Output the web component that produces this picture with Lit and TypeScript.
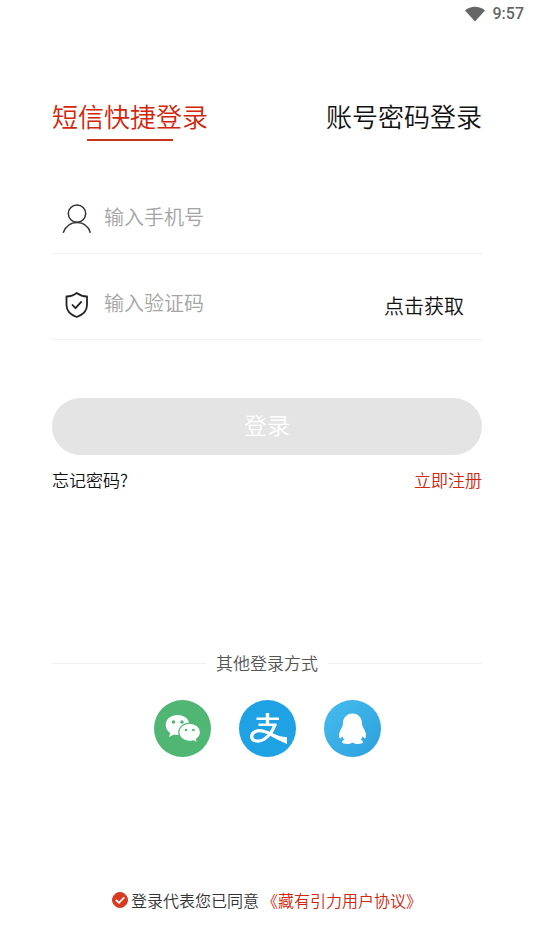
import { LitElement, html, css } from "lit";
import { customElement, state } from "lit/decorators.js";

@customElement("app-root")
export class AppRoot extends LitElement {
  @state() private tab: "sms" | "password" = "sms";

  static styles = css`
    :host {
      display: block;
      background: #fff;
      color: #111;
      font-family: "Noto Sans CJK SC", "Noto Sans", sans-serif;
      font-weight: 350;
    }
    * {
      box-sizing: border-box;
    }
    button,
    input {
      font: inherit;
      color: inherit;
      border: 0;
      margin: 0;
      padding: 0;
      background: none;
    }
    button {
      cursor: pointer;
    }
    svg {
      display: block;
      flex: none;
    }
    .page {
      display: flex;
      flex-direction: column;
      min-height: 100vh;
    }
    .status {
      display: flex;
      align-items: center;
      justify-content: flex-end;
      gap: 8px;
      height: 28px;
      padding-right: 10px;
      color: #666;
      font: 500 16px/28px Roboto, sans-serif;
    }
    main {
      display: flex;
      flex-direction: column;
      padding: 68px 52px 0;
    }
    .tabs {
      display: flex;
      justify-content: space-between;
      height: 72px;
    }
    .tab {
      display: flex;
      flex-direction: column;
      align-items: center;
      gap: 3px;
      font-size: 26px;
      line-height: 40px;
      color: #111;
    }
    .tab.active {
      color: #d2260c;
    }
    .tab.active::after {
      content: "";
      width: 86px;
      height: 2px;
      background: #c8341c;
    }
    .field {
      display: flex;
      align-items: center;
      height: 86px;
      padding: 12px 18px 0 10px;
      border-bottom: 1px solid #f0f0f0;
      font-size: 20px;
      line-height: 30px;
    }
    .field svg {
      margin-top: 4px;
    }
    .field input {
      flex: 1;
      min-width: 0;
      height: 30px;
      margin-left: 12px;
      outline: 0;
    }
    .field input::placeholder {
      color: #a4a4a4;
      opacity: 1;
    }
    .code {
      padding-top: 6px;
    }
    .submit {
      height: 57px;
      margin-top: 58px;
      padding-bottom: 6px;
      border-radius: 29px;
      background: #e4e4e4;
      color: #fff;
      font-size: 23px;
      line-height: 34px;
    }
    .links {
      display: flex;
      justify-content: space-between;
      margin-top: 12px;
      font-size: 17px;
      line-height: 26px;
    }
    a {
      color: inherit;
      text-decoration: none;
    }
    a.red {
      color: #d2260c;
    }
    .divider {
      display: flex;
      align-items: center;
      gap: 10px;
      margin-top: 157px;
      color: #555;
      font-size: 17px;
      line-height: 26px;
    }
    .divider::before,
    .divider::after {
      content: "";
      flex: 1;
      height: 1px;
      background: #efefef;
    }
    .socials {
      display: flex;
      justify-content: center;
      gap: 28px;
      margin-top: 24px;
    }
    footer {
      display: flex;
      align-items: center;
      justify-content: center;
      gap: 3px;
      margin-top: auto;
      padding: 40px 0 36px;
      color: #333;
      font-size: 16px;
      line-height: 26px;
    }
    .agree {
      display: flex;
      align-items: center;
      gap: 3px;
    }
    .box {
      display: grid;
      place-items: center;
    }
    .box > * {
      grid-area: 1 / 1;
    }
    .box input {
      appearance: none;
      width: 16px;
      height: 16px;
      border-radius: 8px;
      border: 1px solid #d63a20;
    }
    .box input:checked {
      background: #d63a20;
    }
    .box svg {
      pointer-events: none;
    }
  `;

  render() {
    return html`
      <div class="page">
        <div class="status">
          <svg width="20" height="16" viewBox="0 0 20 16">
            <path d="M0 4.4C5.6-.6 14.4-.6 20 4.4L10 15.6Z" fill="#666" />
          </svg>
          <span>9:57</span>
        </div>
        <main>
          <div class="tabs" role="tablist">
            ${this.renderTab("sms", "短信快捷登录")}
            ${this.renderTab("password", "账号密码登录")}
          </div>
          <div class="field">
            <svg width="30" height="30" viewBox="0 0 30 30" fill="none" stroke="#333" stroke-width="1.5">
              <circle cx="15" cy="9.6" r="8.7" />
              <path d="M1.2 28.8C3.6 22.4 8.6 18.5 15 18.5S26.400 22.400 28.400 28.800" />
            </svg>
            <input type="tel" aria-label="手机号" placeholder="输入手机号" />
          </div>
          <div class="field">
            <svg width="30" height="30" viewBox="0 0 30 30" fill="none" stroke="#222" stroke-width="1.8" stroke-linejoin="round">
              <path d="M14.700 3C12 5.100 8.400 6.400 4.500 6.500V15C4.500 20.800 9 24.900 14.700 27C20.500 24.900 25 20.800 25 15V6.500C21.200 6.400 17.500 5.100 14.700 3Z" />
              <path d="M10 14.500L13.500 18.200L19.700 11.300" />
            </svg>
            <input type="text" aria-label="验证码" placeholder="输入验证码" />
            <button class="code" type="button">点击获取</button>
          </div>
          <button class="submit" type="button">登录</button>
          <div class="links">
            <a href="#forgot">忘记密码?</a>
            <a class="red" href="#register">立即注册</a>
          </div>
          <div class="divider">其他登录方式</div>
          <div class="socials">
            <button type="button" aria-label="微信">
              <svg width="57" height="57" viewBox="0 0 57 57">
                <circle cx="28.500" cy="28.500" r="28.500" fill="#50b674" />
                <path fill="#fff" d="M23.500 15C16.800 15 11.700 19.300 11.700 25C11.700 28.500 13.500 31.300 16.300 33.100L15 37L20 34.500C22.500 35.200 25 35.100 27 34.600C32 33.500 35.500 29.500 35.500 25C35.500 19.300 30.200 15 23.500 15Z" />
                <path fill="#fff" stroke="#50b674" stroke-width="1.200" d="M35.500 23.200C29.400 23.200 24.800 27.300 24.800 32.300C24.800 37.400 29.400 41.400 35.500 41.400C37 41.400 38.300 41.200 39.500 40.800L43.600 43L42.500 39.200C45 37.500 46.500 35 46.500 32.300C46.500 27.300 41.600 23.200 35.500 23.200Z" />
                <g fill="#50b674">
                  <circle cx="19.500" cy="22" r="1.800" />
                  <circle cx="28" cy="22" r="1.800" />
                  <circle cx="32" cy="30" r="1.300" />
                  <circle cx="39.300" cy="30" r="1.300" />
                </g>
              </svg>
            </button>
            <button type="button" aria-label="支付宝">
              <svg width="57" height="57" viewBox="0 0 57 57">
                <circle cx="28.500" cy="28.500" r="28.500" fill="#1ea2e4" />
                <g fill="none" stroke="#fff">
                  <path stroke-width="3.400" d="M28.500 13V24" />
                  <path stroke-width="2.500" d="M17.500 18.700H40M19.500 24.800H37.500" />
                  <path stroke-width="3.200" d="M36 24.500C34 30.500 30 36 25.500 39C20.500 42.300 13 41.800 12.700 36.800C12.500 32.300 18 29.500 24.500 31.300C31.500 33.200 38 37.600 47 40.500" />
                </g>
                <path fill="#fff" d="M32 33.200C37 35.500 43 36.600 48 37.200V44C42 41.500 36 38.500 31 35.500Z" />
              </svg>
            </button>
            <button type="button" aria-label="QQ">
              <svg width="57" height="57" viewBox="0 0 57 57">
                <defs>
                  <linearGradient id="sky" x1="0" y1="0" x2="1" y2="1">
                    <stop offset="0" stop-color="#45bdee" />
                    <stop offset="1" stop-color="#2d9fdc" />
                  </linearGradient>
                </defs>
                <circle cx="28.500" cy="28.500" r="28.500" fill="url(#sky)" />
                <path fill="#fff" d="M28.500 13.500C22.500 13.500 18.900 18 18.900 24.200C18.900 26.500 16.500 29 15.500 32.500C14.700 35.500 15 38.300 16 38.300C16.800 38.300 17.700 37.200 18.300 36.200C18.700 37.700 19.400 38.900 20.300 39.800C18.900 40.400 18.100 41.200 18.100 42C18.100 43.400 20.400 43.900 23.200 43.900C25.700 43.900 27.500 43.200 28.500 42.400C29.500 43.200 31.300 43.900 33.800 43.900C36.600 43.900 38.900 43.400 38.900 42C38.900 41.200 38.100 40.400 36.700 39.800C37.600 38.900 38.300 37.700 38.700 36.200C39.300 37.200 40.200 38.300 41 38.300C42 38.300 42.300 35.500 41.500 32.500C40.500 29 38.100 26.500 38.100 24.200C38.100 18 34.500 13.500 28.500 13.500Z" />
              </svg>
            </button>
          </div>
        </main>
        <footer>
          <label class="agree">
            <span class="box">
              <input type="checkbox" checked />
              <svg width="16" height="16" viewBox="0 0 16 16" fill="none" stroke="#fff" stroke-width="1.800">
                <path d="M3.800 7.800L7 10.800L12.300 5.400" />
              </svg>
            </span>
            登录代表您已同意
          </label>
          <a class="red" href="#terms">《藏有引力用户协议》</a>
        </footer>
      </div>
    `;
  }

  private renderTab(id: "sms" | "password", label: string) {
    const active = this.tab === id;
    return html`<button
      class="tab ${active ? "active" : ""}"
      type="button"
      role="tab"
      aria-selected=${active ? "true" : "false"}
      @click=${() => (this.tab = id)}
    >${label}</button>`;
  }
}
